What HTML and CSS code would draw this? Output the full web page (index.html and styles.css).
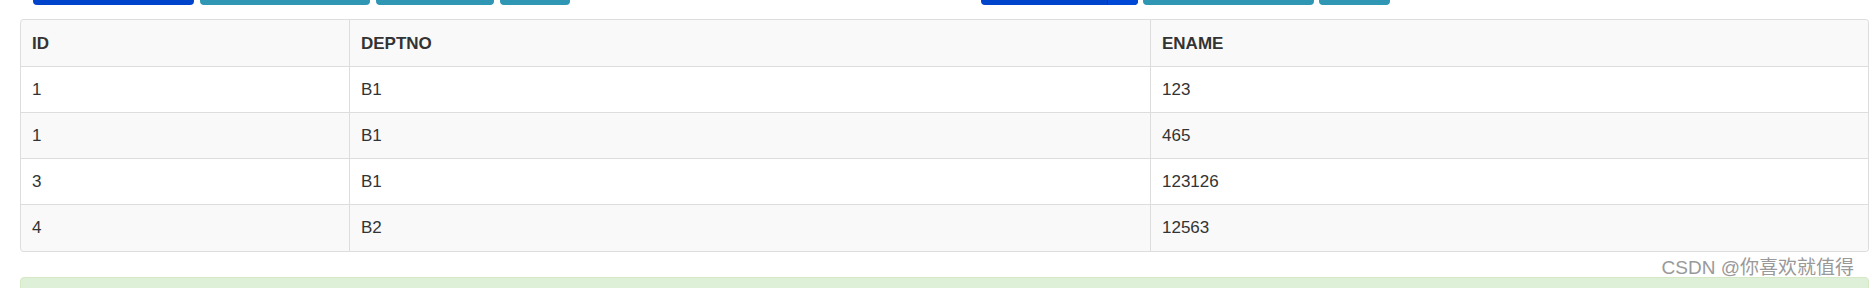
FILE: index.html
```html
<!DOCTYPE html>
<html lang="zh-CN">
<head>
<meta charset="utf-8">
<title>Employees</title>
<link rel="stylesheet" href="styles.css">
</head>
<body>
<div class="page">
  <div class="toolbar">
    <div class="btn-group left">
      <span class="btn btn-primary w161"></span>
      <span class="btn btn-info w170"></span>
      <span class="btn btn-info w118"></span>
      <span class="btn btn-info w70"></span>
    </div>
    <div class="btn-group right">
      <span class="btn btn-primary split w157"><span class="caret-part"></span></span>
      <span class="btn btn-info w171"></span>
      <span class="btn btn-info w71"></span>
    </div>
  </div>
  <table class="data">
    <colgroup>
      <col class="c1"><col class="c2"><col class="c3">
    </colgroup>
    <thead>
      <tr><th>ID</th><th>DEPTNO</th><th>ENAME</th></tr>
    </thead>
    <tbody>
      <tr><td>1</td><td>B1</td><td>123</td></tr>
      <tr class="alt"><td>1</td><td>B1</td><td>465</td></tr>
      <tr><td>3</td><td>B1</td><td>123126</td></tr>
      <tr class="alt"><td>4</td><td>B2</td><td>12563</td></tr>
    </tbody>
  </table>
  <div class="alert-success"></div>
  <div class="watermark">CSDN @你喜欢就值得</div>
</div>
</body>
</html>
```
FILE: styles.css
```css
html, body {
  margin: 0;
  padding: 0;
  background: #fff;
  overflow: hidden;
}
body {
  font-family: "Liberation Sans", Arial, "Noto Sans CJK SC", sans-serif;
  color: #333;
}
.page {
  position: relative;
  width: 1849px;
  height: 288px;
  padding-left: 20px;
  overflow: hidden;
}
.toolbar {
  display: flex;
  height: 5px;
  overflow: hidden;
  align-items: flex-end;
  margin-bottom: 14px;
}
.btn-group {
  display: flex;
  align-items: flex-end;
}
.btn-group.left {
  margin-left: 13px;
  gap: 6px;
}
.btn-group.right {
  margin-left: 411px;
  gap: 5px;
}
.btn {
  display: block;
  height: 34px;
  border-radius: 0 0 4px 4px;
}
.btn-primary { background: #0044cc; }
.btn-info { background: #2f96b4; }
.split {
  display: flex;
  justify-content: flex-end;
}
.caret-part {
  display: block;
  width: 30px;
  border-left: 1px solid #0038b0;
  background: #0048d6;
  border-radius: 0 0 4px 0;
}
.w161 { width: 161px; }
.w170 { width: 170px; }
.w118 { width: 118px; }
.w70 { width: 70px; }
.w157 { width: 157px; }
.w171 { width: 171px; }
.w71 { width: 71px; }

.data {
  width: 1849px;
  table-layout: fixed;
  border-collapse: separate;
  border-spacing: 0;
  border: 1px solid #ddd;
  border-left: 0;
  border-radius: 4px;
  font-size: 17px;
  line-height: 21px;
}
.data col.c1 { width: 329px; }
.data col.c2 { width: 801px; }
.data th, .data td {
  border-left: 1px solid #ddd;
  padding: 12px 11px 12px 11px;
  text-align: left;
  vertical-align: middle;
}
.data th {
  font-weight: bold;
  background: #f9f9f9;
  padding-top: 13px;
}
.data td {
  border-top: 1px solid #ddd;
}
.data tr.alt td {
  background: #f9f9f9;
}
.data thead th:first-child { border-top-left-radius: 4px; }
.data thead th:last-child { border-top-right-radius: 4px; }
.data tbody tr:last-child td:first-child { border-bottom-left-radius: 4px; }
.data tbody tr:last-child td:last-child { border-bottom-right-radius: 4px; }
.data tbody tr:last-child td { padding-bottom: 13px; }

.alert-success {
  margin-top: 25px;
  height: 40px;
  background: #dff0d8;
  border: 1px solid #d6e9c6;
  border-radius: 4px;
}
.watermark {
  position: absolute;
  right: 15px;
  top: 257px;
  font-size: 19px;
  line-height: 22px;
  color: #999;
  text-shadow: 0 0 1px #fff;
  white-space: nowrap;
}
```
